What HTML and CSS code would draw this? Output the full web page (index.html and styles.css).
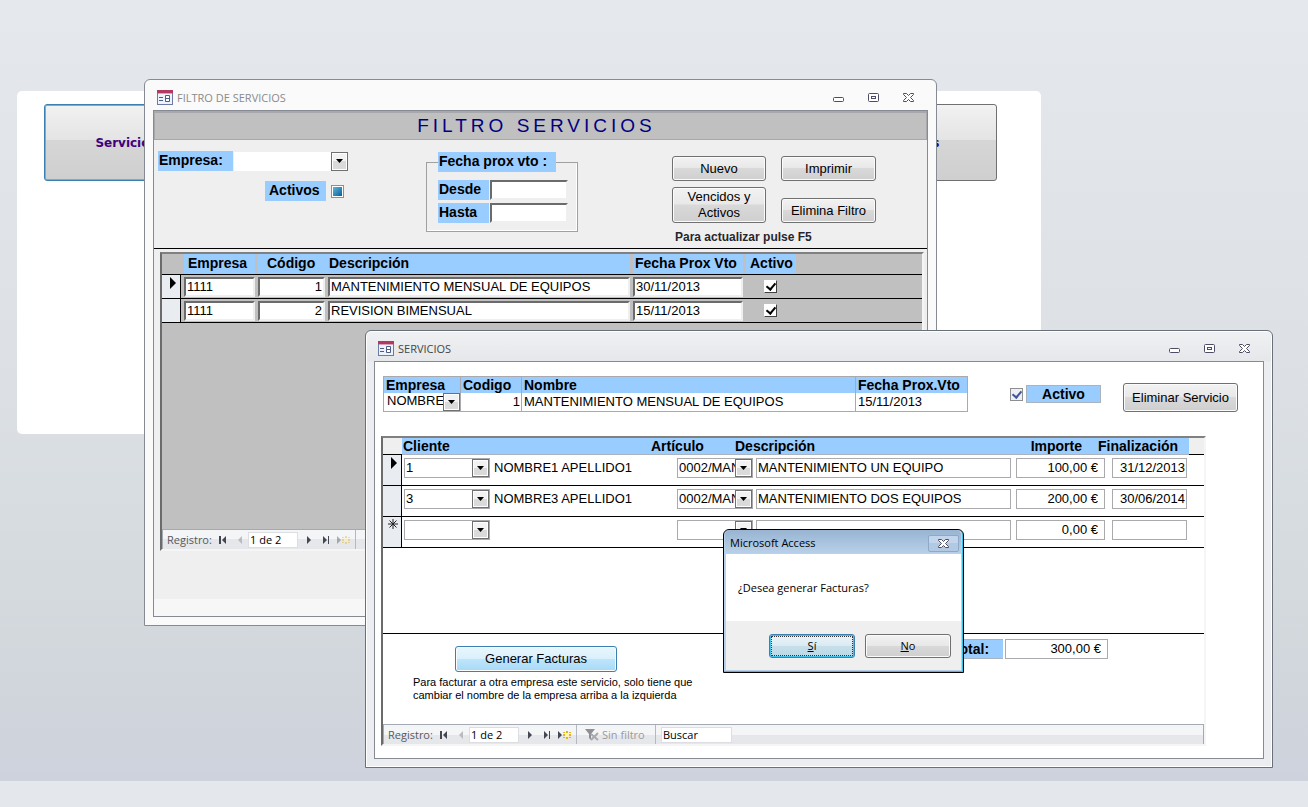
FILE: index.html
```html
<!DOCTYPE html>
<html lang="es">
<head>
    <meta charset="UTF-8">
    <meta name="viewport" content="width=device-width, initial-scale=1.0">
    <title>Servicios</title>
    <link rel="stylesheet" href="styles.css">
</head>
<body>

    <!-- Shared icons -->
    <svg class="icons" aria-hidden="true">
        <symbol id="i-form" viewBox="0 0 16 15">
            <rect x="0.5" y="0.5" width="15" height="14" fill="#eef2fa" stroke="#6b7ba3"/>
            <path d="M0 0h16v3H0z" fill="#b03a62"/>
            <path d="M1 3h14v1H1z" fill="#d9a3b5"/>
            <path d="M2 7.500h4M2 10.500h4" stroke="#4b5c86"/>
            <path d="M8.500 5.500h4v3h-4zM8.500 8.500h4v3h-4z" fill="#fff" stroke="#4b5c86"/>
        </symbol>
        <symbol id="i-min" viewBox="0 0 13 11">
            <rect x="1.500" y="5.500" width="10" height="4" rx="1" fill="#fff" stroke="#4c4c66"/>
        </symbol>
        <symbol id="i-max" viewBox="0 0 13 11">
            <rect x="1.500" y="1.500" width="10" height="8" rx="1" fill="#fff" stroke="#4c4c66"/>
            <rect x="4.500" y="4.500" width="4" height="2" fill="#fff" stroke="#4c4c66"/>
        </symbol>
        <symbol id="i-close" viewBox="0 0 13 11">
            <path d="M1.500 1.500h3l2 2 2-2h3v1l-3 3 3 3v1h-3l-2-2-2 2h-3v-1l3-3-3-3z" fill="#fff" stroke="#4c4c66"/>
        </symbol>
        <symbol id="i-drop" viewBox="0 0 7 4"><path d="M0 0h7L3.500 4z"/></symbol>
        <symbol id="i-current" viewBox="0 0 6 12"><path d="M0 0l6 6-6 6z"/></symbol>
        <symbol id="i-new-row" viewBox="0 0 10 10">
            <path d="M5 0v10M0 5h10M1.500 1.500l7 7M8.500 1.500l-7 7" stroke="#222"/>
        </symbol>
        <symbol id="i-first" viewBox="0 0 8 8"><path d="M0 0h2v8H0zM7 0v8L3 4z" fill="#444752"/></symbol>
        <symbol id="i-prev" viewBox="0 0 8 8"><path d="M6 0v8L2 4z" fill="#b9bbc0"/></symbol>
        <symbol id="i-next" viewBox="0 0 8 8"><path d="M2 0v8l4-4z" fill="#444752"/></symbol>
        <symbol id="i-last" viewBox="0 0 8 8"><path d="M1 0v8l4-4zM6 0h1v8H6z" fill="#444752"/></symbol>
        <symbol id="i-add" viewBox="0 0 13 8">
            <path d="M0 0v8l4-4z" fill="#444752"/>
            <path d="M5 1h2v1H5zM8 0h2v2H8zM11 1h2v1h-2zM5 3h2v2H5zM11 3h2v2h-2zM5 6h2v1H5zM8 6h2v2H8zM11 6h2v1h-2z" fill="#e3b21c"/>
            <path d="M7 2h4v4H7z" fill="#fff3b0"/>
        </symbol>
        <symbol id="i-filter" viewBox="0 0 14 13">
            <path d="M0 1h10L6 6v6L4 10V6z" fill="#8f8f94"/>
            <path d="M6 6l7 6M13 5l-7 7" stroke="#a9a9ae" stroke-width="2"/>
        </symbol>
    </svg>

    <main class="desktop">

        <!-- Menu behind the windows -->
        <nav class="menu">
            <button class="menu-btn selected" type="button">Servicios</button>
            <button class="menu-btn" type="button">Clientes</button>
        </nav>

        <!-- Filter window -->
        <section class="window filter-window">
            <header class="titlebar">
                <svg class="form-icon"><use href="#i-form"/></svg>
                <span class="caption">FILTRO DE SERVICIOS</span>
                <button type="button" aria-label="Minimizar"><svg><use href="#i-min"/></svg></button>
                <button type="button" aria-label="Maximizar"><svg><use href="#i-max"/></svg></button>
                <button type="button" aria-label="Cerrar"><svg><use href="#i-close"/></svg></button>
            </header>
            <div class="client">
                <h1>FILTRO SERVICIOS</h1>

                <form class="filters">
                    <div class="filter-left">
                        <div class="filter-row">
                            <label class="tag" for="empresa">Empresa:</label>
                            <span class="combo plain">
                                <select id="empresa"><option></option></select>
                                <span class="drop"><svg><use href="#i-drop"/></svg></span>
                            </span>
                        </div>
                        <div class="filter-row activos">
                            <label class="tag" for="activos">Activos</label>
                            <input class="tri" type="checkbox" id="activos">
                        </div>
                    </div>

                    <fieldset>
                        <legend class="tag">Fecha prox vto :</legend>
                        <div class="date-row">
                            <label class="tag" for="desde">Desde</label>
                            <input class="sunken" type="text" id="desde">
                        </div>
                        <div class="date-row">
                            <label class="tag" for="hasta">Hasta</label>
                            <input class="sunken" type="text" id="hasta">
                        </div>
                    </fieldset>

                    <div class="actions">
                        <button class="btn" type="button">Nuevo</button>
                        <button class="btn" type="button">Imprimir</button>
                        <button class="btn tall" type="button">Vencidos y Activos</button>
                        <button class="btn" type="button">Elimina Filtro</button>
                        <p>Para actualizar pulse F5</p>
                    </div>
                </form>

                <div class="subform list">
                    <table>
                        <colgroup>
                            <col class="c-sel"><col class="c-emp"><col class="c-cod"><col class="c-desc"><col class="c-fecha"><col class="c-act"><col>
                        </colgroup>
                        <thead>
                            <tr>
                                <th></th>
                                <th><span>Empresa</span></th>
                                <th class="mid"><span>Código</span></th>
                                <th class="join"><span>Descripción</span></th>
                                <th class="near"><span>Fecha Prox Vto</span></th>
                                <th><span>Activo</span></th>
                                <th></th>
                            </tr>
                        </thead>
                        <tbody>
                            <tr>
                                <td class="selector"><svg class="current"><use href="#i-current"/></svg></td>
                                <td><input class="sunken" type="text" aria-label="Empresa" value="1111"></td>
                                <td><input class="sunken num" type="text" aria-label="Código" value="1"></td>
                                <td><input class="sunken" type="text" aria-label="Descripción" value="MANTENIMIENTO MENSUAL DE EQUIPOS"></td>
                                <td><input class="sunken" type="text" aria-label="Fecha Prox Vto" value="30/11/2013"></td>
                                <td class="check"><input class="tick" type="checkbox" aria-label="Activo" checked></td>
                                <td></td>
                            </tr>
                            <tr>
                                <td class="selector"></td>
                                <td><input class="sunken" type="text" aria-label="Empresa" value="1111"></td>
                                <td><input class="sunken num" type="text" aria-label="Código" value="2"></td>
                                <td><input class="sunken" type="text" aria-label="Descripción" value="REVISION BIMENSUAL"></td>
                                <td><input class="sunken" type="text" aria-label="Fecha Prox Vto" value="15/11/2013"></td>
                                <td class="check"><input class="tick" type="checkbox" aria-label="Activo" checked></td>
                                <td></td>
                            </tr>
                        </tbody>
                    </table>
                    <div class="recordbar dim">
                        <label for="reg1">Registro:</label>
                        <button type="button" aria-label="Primero"><svg><use href="#i-first"/></svg></button>
                        <button type="button" aria-label="Anterior"><svg><use href="#i-prev"/></svg></button>
                        <input type="text" id="reg1" value="1 de 2">
                        <button type="button" aria-label="Siguiente"><svg><use href="#i-next"/></svg></button>
                        <button type="button" aria-label="Último"><svg><use href="#i-last"/></svg></button>
                        <button class="add" type="button" aria-label="Nuevo registro"><svg><use href="#i-add"/></svg></button>
                        <span class="nofilter"></span>
                    </div>
                </div>
                <div class="client-foot"></div>
            </div>
        </section>

        <!-- Service window -->
        <section class="window service-window">
            <header class="titlebar">
                <svg class="form-icon"><use href="#i-form"/></svg>
                <span class="caption">SERVICIOS</span>
                <button type="button" aria-label="Minimizar"><svg><use href="#i-min"/></svg></button>
                <button type="button" aria-label="Maximizar"><svg><use href="#i-max"/></svg></button>
                <button type="button" aria-label="Cerrar"><svg><use href="#i-close"/></svg></button>
            </header>
            <div class="client">
                <div class="head">
                    <table class="record">
                        <colgroup><col class="r-emp"><col class="r-cod"><col><col class="r-fecha"></colgroup>
                        <thead>
                            <tr><th>Empresa</th><th>Codigo</th><th>Nombre</th><th>Fecha Prox.Vto</th></tr>
                        </thead>
                        <tbody>
                            <tr>
                                <td>
                                    <span class="combo">
                                        <select aria-label="Empresa"><option>NOMBRE1</option></select>
                                        <span class="drop"><svg><use href="#i-drop"/></svg></span>
                                    </span>
                                </td>
                                <td><input class="num" type="text" aria-label="Codigo" value="1"></td>
                                <td><input type="text" aria-label="Nombre" value="MANTENIMIENTO MENSUAL DE EQUIPOS"></td>
                                <td><input type="text" aria-label="Fecha Prox.Vto" value="15/11/2013"></td>
                            </tr>
                        </tbody>
                    </table>
                    <div class="active-box">
                        <input class="blue-tick" type="checkbox" id="activo" checked>
                        <label class="tag" for="activo">Activo</label>
                    </div>
                    <button class="btn delete" type="button">Eliminar Servicio</button>
                </div>

                <div class="subform detail">
                    <!-- Artículo and Importe cells run a little past their headings -->
                    <table>
                        <colgroup>
                            <col class="d-sel"><col class="d-cli"><col class="d-name"><col class="d-art"><col class="d-art-end"><col class="d-desc"><col class="d-imp"><col class="d-imp-end"><col class="d-fin"><col>
                        </colgroup>
                        <thead>
                            <tr>
                                <th></th>
                                <th class="blue" colspan="2">Cliente</th>
                                <th class="blue">Artículo</th>
                                <th class="blue" colspan="2">Descripción</th>
                                <th class="blue end">Importe</th>
                                <th class="blue" colspan="2">Finalización</th>
                                <th></th>
                            </tr>
                        </thead>
                        <tbody>
                            <tr>
                                <td class="selector"><svg class="current"><use href="#i-current"/></svg></td>
                                <td class="cli"><span class="combo"><select aria-label="Cliente"><option>1</option></select><span class="drop"><svg><use href="#i-drop"/></svg></span></span></td>
                                <td class="name">NOMBRE1 APELLIDO1</td>
                                <td class="art" colspan="2"><span class="combo"><select aria-label="Artículo"><option>0002/MANT</option></select><span class="drop"><svg><use href="#i-drop"/></svg></span></span></td>
                                <td><input class="box" type="text" aria-label="Descripción" value="MANTENIMIENTO UN EQUIPO"></td>
                                <td class="imp" colspan="2"><input class="box num euro" type="text" aria-label="Importe" value="100,00 €"></td>
                                <td class="fin"><input class="box num" type="text" aria-label="Finalización" value="31/12/2013"></td>
                                <td></td>
                            </tr>
                            <tr>
                                <td class="selector"></td>
                                <td class="cli"><span class="combo"><select aria-label="Cliente"><option>3</option></select><span class="drop"><svg><use href="#i-drop"/></svg></span></span></td>
                                <td class="name">NOMBRE3 APELLIDO1</td>
                                <td class="art" colspan="2"><span class="combo"><select aria-label="Artículo"><option>0002/MANT</option></select><span class="drop"><svg><use href="#i-drop"/></svg></span></span></td>
                                <td><input class="box" type="text" aria-label="Descripción" value="MANTENIMIENTO DOS EQUIPOS"></td>
                                <td class="imp" colspan="2"><input class="box num euro" type="text" aria-label="Importe" value="200,00 €"></td>
                                <td class="fin"><input class="box num" type="text" aria-label="Finalización" value="30/06/2014"></td>
                                <td></td>
                            </tr>
                            <tr>
                                <td class="selector new"><svg class="new-row"><use href="#i-new-row"/></svg></td>
                                <td class="cli"><span class="combo"><select aria-label="Cliente"><option></option></select><span class="drop"><svg><use href="#i-drop"/></svg></span></span></td>
                                <td class="name"></td>
                                <td class="art" colspan="2"><span class="combo"><select aria-label="Artículo"><option></option></select><span class="drop"><svg><use href="#i-drop"/></svg></span></span></td>
                                <td><input class="box" type="text" aria-label="Descripción"></td>
                                <td class="imp" colspan="2"><input class="box num euro" type="text" aria-label="Importe" value="0,00 €"></td>
                                <td class="fin"><input class="box" type="text" aria-label="Finalización"></td>
                                <td></td>
                            </tr>
                        </tbody>
                    </table>

                    <div class="detail-foot">
                        <div class="invoice">
                            <button class="btn hot" type="button">Generar Facturas</button>
                            <p>Para facturar a otra empresa este servicio, solo tiene que cambiar el nombre de la empresa arriba a la izquierda</p>
                        </div>
                        <div class="total">
                            <label class="tag" for="total">Total:</label>
                            <input class="box num euro" type="text" id="total" value="300,00 €">
                        </div>
                    </div>

                    <div class="recordbar">
                        <label for="reg2">Registro:</label>
                        <button type="button" aria-label="Primero"><svg><use href="#i-first"/></svg></button>
                        <button type="button" aria-label="Anterior"><svg><use href="#i-prev"/></svg></button>
                        <input type="text" id="reg2" value="1 de 2">
                        <button type="button" aria-label="Siguiente"><svg><use href="#i-next"/></svg></button>
                        <button type="button" aria-label="Último"><svg><use href="#i-last"/></svg></button>
                        <button class="add" type="button" aria-label="Nuevo registro"><svg><use href="#i-add"/></svg></button>
                        <span class="nofilter"><svg><use href="#i-filter"/></svg>Sin filtro</span>
                        <input class="search" type="text" aria-label="Buscar" value="Buscar">
                    </div>
                </div>
            </div>
        </section>

        <!-- Message box -->
        <div class="dialog" role="dialog" aria-labelledby="dlg-title">
            <header>
                <span id="dlg-title">Microsoft Access</span>
                <button type="button" aria-label="Cerrar"><svg><use href="#i-close"/></svg></button>
            </header>
            <p>¿Desea generar Facturas?</p>
            <footer>
                <button class="btn focus" type="button"><u>S</u>í</button>
                <button class="btn" type="button"><u>N</u>o</button>
            </footer>
        </div>
    </main>

    <div class="statusbar"></div>

</body>
</html>
```
FILE: styles.css
```css
/* General styles */
* {
    box-sizing: border-box;
}

body {
    margin: 0;
    min-height: 100vh;
    display: flex;
    flex-direction: column;
    font-family: "Liberation Sans", Arial, sans-serif;
    font-size: 13px;
    line-height: 16px;
    color: #000;
    background-color: #e4e8ed;
}

button,
input,
select {
    font: inherit;
    color: inherit;
    margin: 0;
    padding: 0;
    border: 0;
    border-radius: 0;
    background: none;
}

input,
select {
    appearance: none;
    min-width: 0;
    outline: none;
}

h1,
p {
    margin: 0;
}

svg {
    display: block;
}

.icons {
    display: none;
}

table {
    width: 100%;
    table-layout: fixed;
    border-collapse: separate;
    border-spacing: 0;
}

th,
td {
    padding: 0;
    text-align: left;
    font-weight: normal;
    white-space: nowrap;
}

.desktop {
    position: relative;
    flex: 1;
    padding: 91px 17px 0;
    background: linear-gradient(#e5e8ed, #dce0e5 50%, #d3d9dd 78%, #ced2dc);
}

.statusbar {
    height: 26px;
}

/* Menu */
.menu {
    display: flex;
    justify-content: space-between;
    max-width: 1024px;
    min-height: 343px;
    padding: 13px 44px 0 27px;
    border-radius: 5px;
    background-color: #fff;
}

.menu-btn {
    width: 167px;
    height: 77px;
    padding-right: 3px;
    border: 1px solid #707070;
    border-radius: 3px;
    background: linear-gradient(#f2f2f2, #e4e4e4 46%, #d6d6d6 47%, #cfcfcf);
    font-family: "DejaVu Sans", Verdana, sans-serif;
    font-size: 12px;
    font-weight: bold;
    color: #1a0a8c;
}

.menu-btn.selected {
    border-color: #3c7fb1;
    box-shadow: inset 0 0 0 1px #43c3ec;
    color: #40007c;
}

/* Shared controls */
.tag {
    padding-left: 1px;
    background-color: #99ccff;
    font-size: 14px;
    font-weight: bold;
    line-height: 18px;
}

.btn {
    border: 1px solid #707070;
    border-radius: 3px;
    box-shadow: inset 0 0 0 1px #fbfbfb;
    background: linear-gradient(#f2f2f2, #e8e8e8 48%, #d9d9d9 49%, #cfcfcf);
}

.num {
    text-align: right;
}

.sunken {
    display: block;
    width: 100%;
    height: 20px;
    padding: 0 1px;
    border: 2px solid;
    border-color: #6b6b6b #efefef #efefef #6b6b6b;
    background-color: #fff;
}

.box {
    display: block;
    width: 100%;
    height: 20px;
    padding: 0 1px 2px;
    border: 1px solid #a9a9ae;
    background-color: #fff;
}

.euro {
    padding-right: 6px;
}

.combo {
    display: flex;
    height: 20px;
    border: 1px solid #a9a9ae;
    background-color: #fff;
}

.combo select {
    flex: 1;
    padding-left: 1px;
    overflow: hidden;
    text-overflow: clip;
}

.combo.plain {
    flex: 1;
    border: 0;
    height: 19px;
}

.drop {
    display: flex;
    align-items: center;
    justify-content: center;
    width: 17px;
    border: 1px solid #707070;
    box-shadow: inset 0 0 0 1px #fff;
    background: linear-gradient(#f2f2f2 50%, #dadada 50%);
}

.drop svg {
    width: 7px;
    height: 4px;
}

/* Windows */
.window {
    position: absolute;
    border: 1px solid #868b93;
    border-radius: 6px 6px 0 0;
    padding: 0 8px 8px;
}

.filter-window {
    left: 144px;
    top: 79px;
    width: 793px;
    background-color: #fafafa;
}

.service-window {
    left: 365px;
    top: 330px;
    width: 908px;
    border-color: #69707a;
    background: linear-gradient(#f0f1f3, #e6e7ea 30px, #ebedf1 31px);
    box-shadow: inset 0 0 0 1px #fff;
}

.titlebar {
    display: flex;
    align-items: center;
    gap: 22px;
    height: 30px;
    padding: 5px 13px 0 4px;
    font-family: "Open Sans", "Noto Sans", sans-serif;
    font-size: 11px;
    color: #8a8a8a;
}

.service-window .titlebar {
    color: #444;
}

.form-icon {
    width: 16px;
    height: 15px;
}

.caption {
    flex: 1;
    margin-left: -18px;
}

.titlebar button svg {
    width: 13px;
    height: 11px;
}

.client {
    border: 1px solid #868b93;
    background-color: #efefef;
}

/* Filter form */
h1 {
    height: 29px;
    padding-right: 8px;
    border: 1px solid #a7a8ac;
    border-top-width: 2px;
    background-color: #c0c0c0;
    font-size: 19px;
    font-weight: normal;
    line-height: 26px;
    letter-spacing: 4px;
    text-align: center;
    color: #000080;
}

.filters {
    display: flex;
    height: 109px;
    padding: 11px 51px 0 4px;
    border-bottom: 1px solid #000;
}

.filter-left {
    width: 190px;
    margin-right: 78px;
}

.filter-row {
    display: flex;
    align-items: center;
    gap: 1px;
    height: 20px;
}

.filter-row .tag {
    width: 75px;
    height: 20px;
}

.activos {
    gap: 5px;
    margin: 10px 0 0 107px;
}

.activos .tag {
    width: 61px;
    padding-left: 4px;
}

.tri {
    width: 13px;
    height: 13px;
    border: 1px solid #8e8f8f;
    background: linear-gradient(135deg, #5cb8dc, #0b5f96) center / 9px 9px no-repeat #fff;
}

fieldset {
    width: 152px;
    height: 80px;
    margin: 1px 0 0;
    padding: 8px 9px 0 11px;
    border: 1px solid #a0a0a0;
    box-shadow: inset -1px -1px 0 #fff;
}

legend {
    width: 118px;
    height: 20px;
    padding-left: 2px;
}

.date-row {
    display: flex;
    gap: 1px;
    margin-bottom: 3px;
}

.date-row .tag {
    width: 51px;
    height: 20px;
    flex: none;
}

.actions {
    flex: 1;
    display: grid;
    grid-template-columns: 94px 95px;
    grid-template-rows: 25px 36px 16px;
    gap: 6px 15px;
    justify-content: end;
    align-items: end;
    padding-top: 5px;
}

.actions .btn {
    height: 25px;
}

.actions .tall {
    height: 36px;
    padding: 0 6px;
}

.actions p {
    grid-column: 1 / 3;
    padding-left: 3px;
    font-size: 12px;
    font-weight: bold;
    color: #26262e;
}

/* Subforms */
.subform {
    border: 2px solid;
    border-color: #808080 #f5f5f5 #f5f5f5 #6b6b6b;
}

.list {
    display: flex;
    flex-direction: column;
    height: 299px;
    margin: 3px 3px 0 6px;
    background-color: #c0c0c0;
}

.list th,
.list td {
    height: 24px;
    padding-left: 3px;
    border-bottom: 1px solid #000;
}

.list th {
    height: 21px;
    vertical-align: top;
    font-size: 14px;
    font-weight: bold;
    line-height: 19px;
}

.list th span {
    display: block;
    height: 20px;
    padding-left: 4px;
    background-color: #99ccff;
}

.list th.mid span {
    padding-left: 9px;
}

.list th.join {
    padding-left: 0;
}

.list th.near span {
    padding-left: 2px;
}

.c-sel { width: 19px; }
.c-emp { width: 74px; }
.c-cod { width: 70px; }
.c-desc { width: 305px; }
.c-fecha { width: 113px; }
.c-act { width: 53px; }

.list td.selector,
.detail td.selector {
    padding: 2px 0 0 8px;
    border-right: 1px solid #000;
    background-color: #e9ecf1;
    vertical-align: top;
}

.current {
    width: 6px;
    height: 12px;
}

.new-row {
    width: 10px;
    height: 10px;
}

.list td.check {
    padding-left: 21px;
}

.tick {
    display: block;
    width: 13px;
    height: 13px;
    border: 1px solid;
    border-color: #fff #404040 #404040 #fff;
    background-color: #fff;
}

.tick::before,
.blue-tick::before {
    content: "";
    display: block;
    width: 4px;
    height: 7px;
    margin-left: 3px;
    border: solid #000;
    border-width: 0 2px 2px 0;
    transform: rotate(40deg);
}

.client-foot {
    height: 65px;
    background: linear-gradient(#efefef 48px, #f7f7f7 48px);
}

/* Record bar */
.recordbar {
    display: flex;
    align-items: center;
    height: 20px;
    margin-top: auto;
    padding-left: 4px;
    border: 1px solid #a5a9b3;
    border-width: 1px 1px 0 1px;
    background: linear-gradient(#f4f5f7 50%, #e6e7ea 50%);
    font-family: "Open Sans", "Noto Sans", sans-serif;
    font-size: 11px;
}

.recordbar label {
    width: 47px;
    color: #555962;
}

.recordbar button {
    width: 16px;
    margin-left: 1px;
}

.recordbar button svg {
    width: 8px;
    height: 8px;
    margin: 0 auto;
}

.recordbar .add svg {
    width: 13px;
}

.dim .add {
    opacity: 0.4;
}

.recordbar input {
    width: 50px;
    height: 16px;
    margin: 0 2px 0 0;
    padding-left: 1px;
    border: 1px solid #dcdee3;
    background-color: #fff;
}

.nofilter {
    display: flex;
    align-items: center;
    gap: 3px;
    width: 80px;
    height: 19px;
    margin-left: 4px;
    padding-left: 8px;
    border: solid #b5b8c0;
    border-width: 0 1px;
    color: #9a9a9e;
}

.nofilter svg {
    width: 14px;
    height: 13px;
}

.recordbar .search {
    width: 71px;
    margin-left: 5px;
}

/* Service form */
.service-window .client {
    padding: 14px 25px 12px 7px;
    background-color: #fff;
}

.head {
    display: flex;
    align-items: flex-start;
    padding-left: 1px;
}

.record {
    width: 585px;
    border: 1px solid #a9a9ae;
    border-width: 1px 0 0 1px;
}

.record th {
    height: 16px;
    padding-left: 2px;
    border-right: 1px solid #a9a9ae;
    background-color: #99ccff;
    font-size: 14px;
    font-weight: bold;
    line-height: 16px;
}

.record td {
    border: 1px solid #a9a9ae;
    border-width: 0 1px 1px 0;
}

.record input {
    display: block;
    width: 100%;
    height: 18px;
    padding: 0 1px 2px 2px;
}

.record .combo {
    height: 18px;
    border: 0;
}

.record select {
    padding: 0 0 2px 3px;
}

.r-emp { width: 77px; }
.r-cod { width: 61px; }
.r-fecha { width: 112px; }

.active-box {
    display: flex;
    align-items: center;
    gap: 3px;
    margin: 9px 0 0 42px;
}

.active-box .tag {
    width: 75px;
    height: 18px;
    padding: 0;
    border: 1px solid #a9b4c0;
    line-height: 17px;
    text-align: center;
}

.blue-tick {
    width: 13px;
    height: 13px;
    border: 1px solid #8e8f8f;
    background-color: #eef0f4;
}

.blue-tick::before {
    border-color: #4155a0;
}

.delete {
    width: 115px;
    height: 29px;
    margin: 7px 0 0 22px;
}

.detail {
    display: flex;
    flex-direction: column;
    height: 310px;
    margin: 24px 32px 0 -1px;
}

.detail th {
    height: 17px;
    border-bottom: 1px solid #000;
    background-color: #efefef;
    font-size: 14px;
    font-weight: bold;
    line-height: 16px;
}

.detail th.blue {
    padding-left: 1px;
    border-bottom-color: #a9b4c0;
    background-color: #99ccff;
}

.detail th.end {
    padding-right: 15px;
    text-align: right;
}

.detail td {
    height: 31px;
    padding: 3px 0 0 3px;
    border-bottom: 1px solid #000;
    vertical-align: top;
}

.detail td.cli {
    padding-left: 2px;
}

.detail td.name {
    padding: 5px 0 0 4px;
}

.detail td.art {
    padding-left: 27px;
}

.detail td.imp {
    padding-left: 5px;
}

.detail td.fin {
    padding: 3px 2px 0 7px;
}

.detail td.new {
    padding-left: 5px;
}

.d-sel { width: 19px; }
.d-cli { width: 88px; }
.d-name { width: 160px; }
.d-art { width: 84px; }
.d-art-end { width: 19px; }
.d-desc { width: 258px; }
.d-imp { width: 86px; }
.d-imp-end { width: 8px; }
.d-fin { width: 84px; }

.detail-foot {
    display: flex;
    justify-content: space-between;
    align-items: flex-start;
    margin-top: 85px;
    padding: 5px 96px 0 30px;
    border-top: 1px solid #000;
}

.invoice {
    width: 290px;
    padding-top: 7px;
}

.invoice .btn {
    width: 162px;
    height: 26px;
    margin-left: 42px;
}

.invoice p {
    margin-top: 4px;
    font-size: 11px;
    line-height: 13px;
}

.btn.hot {
    border-color: #3c7fb1;
    background: linear-gradient(#eaf6fd, #d9f0fc 48%, #bee6fd 49%, #a7d9f5);
}

.total {
    display: flex;
    gap: 2px;
}

.total .tag {
    width: 60px;
    height: 20px;
    padding-left: 9px;
    border: 1px solid #a9b4c0;
    border-width: 1px 0;
}

.total .box {
    width: 103px;
}

/* Message box */
.dialog {
    position: absolute;
    left: 723px;
    top: 529px;
    width: 241px;
    padding: 0 1px 1px;
    border: 1px solid #000;
    border-radius: 6px 6px 0 0;
    background-color: #b9d1ea;
    box-shadow: inset -1px -1px 0 #35c3e6;
    font-family: "Open Sans", "Noto Sans", sans-serif;
    font-size: 11px;
}

.dialog header {
    display: flex;
    justify-content: space-between;
    align-items: center;
    height: 24px;
    margin: 0 1px 0 0;
    padding: 2px 2px 0 5px;
    border-radius: 5px 5px 0 0;
    background: linear-gradient(#98b4d2, #b9d1ea);
}

.dialog header button {
    display: flex;
    align-items: center;
    justify-content: center;
    width: 31px;
    height: 17px;
    border: 1px solid #8ea9c8;
    border-radius: 2px;
    background: linear-gradient(#c3d5ea 50%, #b2c9e3 50%);
}

.dialog header svg {
    width: 13px;
    height: 11px;
}

.dialog p {
    height: 67px;
    margin: 0 1px;
    padding: 26px 12px 0;
    background-color: #fff;
}

.dialog footer {
    display: flex;
    justify-content: flex-end;
    gap: 10px;
    height: 49px;
    margin: 0 1px 1px;
    padding: 13px 10px 0;
    background-color: #efefef;
}

.dialog footer .btn {
    width: 86px;
    height: 24px;
}

.dialog footer .focus {
    border-color: #3c7fb1;
    box-shadow: inset 0 0 0 1px #43c3ec;
    background: linear-gradient(#eaf4f9, #dbeaf2 48%, #c6dfeb 49%, #bcd8e6);
    outline: 1px dotted #333;
    outline-offset: -3px;
}
```
